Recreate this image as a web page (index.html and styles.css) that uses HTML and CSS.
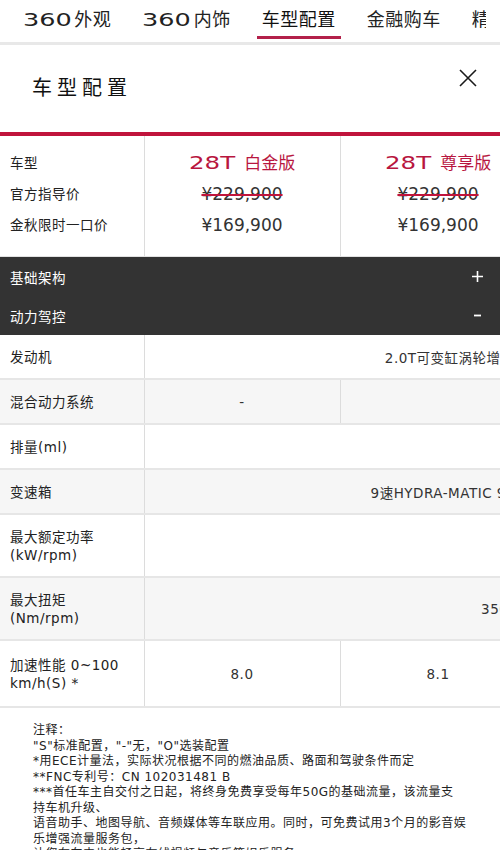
FILE: index.html
```html
<!DOCTYPE html>
<html lang="zh-CN">
<head>
<meta charset="utf-8">
<title>车型配置</title>
<link rel="stylesheet" href="styles.css">
</head>
<body>
<nav class="tabs">
  <div class="tab-track">
    <div class="tab"><span class="wide">360</span>外观</div>
    <div class="tab"><span class="wide">360</span>内饰</div>
    <div class="tab active">车型配置</div>
    <div class="tab">金融购车</div>
    <div class="tab">精品附件</div>
  </div>
</nav>

<header class="head">
  <h1 class="title">车型配置</h1>
  <button class="close" aria-label="关闭">
    <svg width="18" height="18" viewBox="0 0 18 18"><path d="M1 1 L17 17 M17 1 L1 17" stroke="#1a1a1a" stroke-width="1.6" fill="none"/></svg>
  </button>
</header>
<div class="redbar"></div>

<div class="scroller">
  <table class="models">
    <colgroup><col class="c-label"><col class="c-model"><col class="c-model"><col class="c-model"><col class="c-model"></colgroup>
    <tr class="r-name">
      <th>车型</th>
      <td class="name"><span class="wide">28T</span> 白金版</td>
      <td class="name"><span class="wide">28T</span> 尊享版</td>
      <td class="name"><span class="wide">28T</span> 尊贵版</td>
      <td class="name"><span class="wide">28T</span> 旗舰版</td>
    </tr>
    <tr class="r-msrp">
      <th>官方指导价</th>
      <td><s>¥229,900</s></td>
      <td><s>¥229,900</s></td>
      <td><s>¥249,900</s></td>
      <td><s>¥269,900</s></td>
    </tr>
    <tr class="r-price">
      <th>金秋限时一口价</th>
      <td>¥169,900</td>
      <td>¥169,900</td>
      <td>¥189,900</td>
      <td>¥209,900</td>
    </tr>
  </table>
</div>

<div class="group"><span>基础架构</span><svg width="11" height="11" viewBox="0 0 11 11"><path d="M5.5 0 V11 M0 5.5 H11" stroke="#fff" stroke-width="1.6"/></svg></div>
<div class="group"><span>动力驾控</span><svg width="11" height="11" viewBox="0 0 11 11"><path d="M2 5.5 H9" stroke="#fff" stroke-width="1.8"/></svg></div>

<div class="scroller">
  <table class="spec">
    <colgroup><col class="c-label"><col class="c-model"><col class="c-model"><col class="c-model"><col class="c-model"></colgroup>
    <tr class="one">
      <th>发动机</th>
      <td colspan="4">2.0T可变缸涡轮增压发动机（LSY型），直列四缸</td>
    </tr>
    <tr class="one alt">
      <th>混合动力系统</th>
      <td>-</td>
      <td colspan="3">48V轻混系统</td>
    </tr>
    <tr class="one">
      <th>排量(ml)</th>
      <td colspan="4">1998</td>
    </tr>
    <tr class="one alt">
      <th>变速箱</th>
      <td colspan="4">9速HYDRA-MATIC 9速手自一体变速箱（电子换挡）</td>
    </tr>
    <tr class="two">
      <th>最大额定功率<span class="unit">(kW/rpm)</span></th>
      <td colspan="4">174/5000</td>
    </tr>
    <tr class="two alt">
      <th>最大扭矩<span class="unit">(Nm/rpm)</span></th>
      <td colspan="4">350/1500-4000</td>
    </tr>
    <tr class="three">
      <th>加速性能 0~100 km/h(S) *</th>
      <td>8.0</td>
      <td>8.1</td>
      <td>8.1</td>
      <td>8.1</td>
    </tr>
  </table>
</div>

<section class="notes">
  <p>注释：</p>
  <p>"S"标准配置，"-"无，"O"选装配置</p>
  <p>*用ECE计量法，实际状况根据不同的燃油品质、路面和驾驶条件而定</p>
  <p>**FNC专利号：CN 102031481 B</p>
  <p>***首任车主自交付之日起，将终身免费享受每年50G的基础流量，该流量支<br>持车机升级、</p>
  <p>语音助手、地图导航、音频媒体等车联应用。同时，可免费试用3个月的影音娱乐增强流量服务包，</p>
  <p>让您在车内也能畅享在线视频与音乐等娱乐服务。</p>
</section>
</body>
</html>
```
FILE: styles.css
```css
html, body {
  margin: 0;
  padding: 0;
}

body {
  width: 500px;
  overflow: hidden;
  background: #fff;
  color: #222;
  font-family: "DejaVu Sans", "Noto Sans CJK SC", sans-serif;
}

/* extended-looking latin (brand display face) */
.wide {
  display: inline-block;
  transform: scaleX(1.42);
  transform-origin: 0 50%;
}

/* top tabs */
.tabs {
  height: 42px;
  border-bottom: 3px solid #e8e8e8;
}

.tab-track {
  display: flex;
  align-items: flex-start;
  gap: 21px;
  width: 486px;
  height: 42px;
  padding-left: 18px;
  box-sizing: border-box;
  white-space: nowrap;
  overflow: hidden;
}

.tab {
  flex: none;
  padding: 10px 5px 6px;
  font-size: 18px;
  line-height: 20px;
  letter-spacing: 0.5px;
  color: #222;
  border-bottom: 3px solid transparent;
}

.tab .wide {
  letter-spacing: 0;
  margin-right: 17px;
}

.tab.active {
  color: #111;
  border-bottom-color: #b3204a;
}

/* header */
.head {
  display: flex;
  justify-content: space-between;
  align-items: flex-start;
  height: 87px;
  padding: 0 23px 0 32px;
  box-sizing: border-box;
}

.title {
  margin: 29px 0 0;
  font-size: 20px;
  line-height: 28px;
  font-weight: normal;
  letter-spacing: 5px;
  color: #111;
}

.close {
  margin-top: 24px;
  width: 18px;
  height: 18px;
  padding: 0;
  border: 0;
  background: none;
  display: block;
}

.close svg {
  display: block;
}

.redbar {
  height: 4px;
  background: #c0143c;
}

/* tables */
.scroller {
  width: 500px;
  overflow: hidden;
}

table {
  border-collapse: collapse;
  table-layout: fixed;
  width: 928px;
}

.c-label {
  width: 144px;
}

.c-model {
  width: 196px;
}

.models th {
  text-align: left;
  font-weight: normal;
  font-size: 13.5px;
  letter-spacing: 0.5px;
  padding: 0 0 0 10px;
  line-height: 31px;
}

.models td {
  text-align: center;
  border-left: 1px solid #dcdcdc;
  padding: 0;
  line-height: 31px;
  font-size: 17px;
  color: #333;
}

.models .r-name th,
.models .r-name td {
  padding-top: 12px;
}

.models .r-price th,
.models .r-price td {
  padding-bottom: 15px;
  border-bottom: 1px solid #e2e2e2;
}

.models .name {
  color: #b8163f;
  font-size: 17px;
}

.models .name .wide {
  transform: scaleX(1.44);
  margin-right: 18px;
}

.models s {
  text-decoration-color: #c0143c;
  text-decoration-thickness: 1.5px;
}

/* group bars */
.group {
  display: flex;
  justify-content: space-between;
  align-items: center;
  height: 39px;
  padding: 0 17px 0 10px;
  background: #333;
  color: #fff;
  font-size: 13.5px;
  letter-spacing: 0.5px;
}

.group svg {
  display: block;
}

/* spec rows */
.spec th {
  text-align: left;
  font-weight: normal;
  font-size: 13.5px;
  line-height: 18px;
  letter-spacing: 0.5px;
  padding: 0 6px 0 10px;
  border-bottom: 2px solid #e6e6e6;
}

.spec .unit {
  display: block;
}

.spec td {
  text-align: center;
  font-size: 13.5px;
  letter-spacing: 0.5px;
  color: #333;
  padding: 0;
  border-left: 1px solid #dcdcdc;
  border-bottom: 2px solid #e6e6e6;
  white-space: nowrap;
}

.spec .alt {
  background: #f6f6f6;
}

.spec .one th {
  height: 43px;
}

.spec .two th {
  height: 61px;
}

.spec .three th {
  height: 65px;
}

/* notes */
.notes {
  padding: 15px 33px 0;
  font-size: 12px;
  line-height: 15.5px;
  letter-spacing: 0.5px;
  color: #222;
}

.notes p {
  margin: 0;
}
```
